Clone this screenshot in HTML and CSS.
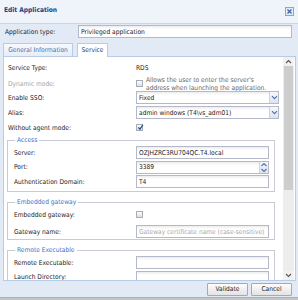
FILE: index.html
```html
<!DOCTYPE html>
<html lang="en">
<head>
  <meta charset="UTF-8" />
  <title>Edit Application</title>
  <link rel="stylesheet" href="styles.css">
</head>
<body>

  <div class="window">

    <!-- title bar -->
    <div class="header">
      <span class="title">Edit Application</span>
      <span class="close">
        <svg width="9" height="9" viewBox="0 0 9 9">
          <rect x="0.5" y="0.5" width="8" height="8" fill="#e3ecf9" stroke="#86a6d6" />
          <path d="M2.5 2.5 L6.5 6.5 M6.5 2.5 L2.5 6.5" stroke="#3a63a6" stroke-width="1.2" />
        </svg>
      </span>
    </div>

    <div class="type-row">
      <span class="type-label">Application type:</span>
      <div class="field type-field">Privileged application</div>
    </div>

    <!-- tabs -->
    <div class="tabs">
      <div class="tab">General Information</div>
      <div class="tab active">Service</div>
    </div>

    <div class="panel">
      <div class="content">

        <div class="row first">
          <span class="label">Service Type:</span>
          <span class="value">RDS</span>
        </div>

        <div class="row dyn">
          <span class="label muted">Dynamic mode:</span>
          <span class="check"></span>
          <span class="hint">Allows the user to enter the server's<br>address when launching the application.</span>
        </div>

        <div class="row sso">
          <span class="label">Enable SSO:</span>
          <div class="field combo"><span class="text">Fixed</span>
            <span class="trigger">
              <svg width="7" height="5" viewBox="0 0 7 5"><path d="M1 1.2 L3.5 3.7 L6 1.2" fill="none" stroke="#4d73b0" stroke-width="1.2" /></svg>
            </span>
          </div>
        </div>

        <div class="row">
          <span class="label">Alias:</span>
          <div class="field combo"><span class="text">admin windows (T4\vs_adm01)</span>
            <span class="trigger">
              <svg width="7" height="5" viewBox="0 0 7 5"><path d="M1 1.2 L3.5 3.7 L6 1.2" fill="none" stroke="#4d73b0" stroke-width="1.2" /></svg>
            </span>
          </div>
        </div>

        <div class="row">
          <span class="label">Without agent mode:</span>
          <span class="check checked">
            <svg width="7" height="7" viewBox="0 0 7 7">
              <path d="M1.3 3.4 L2.9 5.2 L5.9 0.8" fill="none" stroke="#2b4c8c" stroke-width="1.2" />
            </svg>
          </span>
        </div>

        <fieldset class="group">
          <legend>Access</legend>
          <div class="row">
            <span class="label">Server:</span>
            <div class="field"><span class="text">OZJHZRC3RU704QC.T4.local</span></div>
          </div>
          <div class="row next">
            <span class="label">Port:</span>
            <div class="field combo"><span class="text">3389</span>
              <span class="trigger">
                <svg width="8" height="11" viewBox="0 0 8 11">
                  <path d="M1.5 4 L4 1.5 L6.5 4" fill="none" stroke="#4d73b0" stroke-width="1.1" />
                  <path d="M1.5 7 L4 9.5 L6.5 7" fill="none" stroke="#4d73b0" stroke-width="1.1" />
                </svg>
              </span>
            </div>
          </div>
          <div class="row next">
            <span class="label">Authentication Domain:</span>
            <div class="field"><span class="text">T4</span></div>
          </div>
        </fieldset>

        <fieldset class="group">
          <legend>Embedded gateway</legend>
          <div class="row">
            <span class="label">Embedded gateway:</span>
            <span class="check"></span>
          </div>
          <div class="row gw">
            <span class="label">Gateway name:</span>
            <div class="field"><span class="text placeholder">Gateway certificate name (case-sensitive)</span></div>
          </div>
        </fieldset>

        <fieldset class="group">
          <legend>Remote Executable</legend>
          <div class="row">
            <span class="label">Remote Executable:</span>
            <div class="field"></div>
          </div>
          <div class="row next">
            <span class="label">Launch Directory:</span>
            <div class="field"></div>
          </div>
        </fieldset>

      </div>

      <!-- vertical scrollbar -->
      <div class="scrollbar">
        <span class="arrow">
          <svg width="7" height="5" viewBox="0 0 7 5"><path d="M1 4 L3.5 1.5 L6 4" fill="none" stroke="#555" stroke-width="1.1" /></svg>
        </span>
        <span class="thumb"></span>
        <span class="track"></span>
        <span class="arrow">
          <svg width="7" height="5" viewBox="0 0 7 5"><path d="M1 1 L3.5 3.5 L6 1" fill="none" stroke="#555" stroke-width="1.1" /></svg>
        </span>
      </div>
    </div>

    <div class="footer">
      <button class="btn">Validate</button>
      <button class="btn">Cancel</button>
    </div>

  </div>

</body>
</html>
```

FILE: styles.css
```css
* {
  box-sizing: border-box;
}

body {
  margin: 0;
  background: #c4c4c4;
  font-family: "DejaVu Sans Condensed", "DejaVu Sans", sans-serif;
  font-size: 6.6px;
  color: #222;
}

.window {
  width: 298px;
  height: 298px;
  background: #e2eaf6;
  border-bottom: 1px solid #a8b2c0;
  display: flex;
  flex-direction: column;
}

.header {
  height: 24px;
  flex: none;
  background: #eff4fb;
  border-bottom: 1px solid #c4d4ec;
  display: flex;
  align-items: flex-start;
  justify-content: space-between;
  padding: 6px 4px 0 4px;
  line-height: 8px;
}

.title {
  font-weight: bold;
  color: #15428b;
}

.close {
  display: flex;
  margin-top: 1px;
}

.type-row {
  height: 19px;
  flex: none;
  display: flex;
  align-items: flex-start;
  padding: 1px 6px 0 5px;
}

.type-label {
  width: 73px;
  line-height: 15px;
}

.type-field {
  flex: 1;
}

.tabs {
  height: 13px;
  flex: none;
  display: flex;
  gap: 4px;
  padding-left: 3px;
}

.tab {
  width: 70px;
  height: 13px;
  border: 1px solid #b9cbe6;
  border-bottom: none;
  background: linear-gradient(#f7f9fd, #e6edf8);
  color: #4a6fa8;
  text-align: center;
  line-height: 12px;
}

.tab.active {
  width: 31px;
  background: #fff;
  color: #15428b;
  height: 14px;
  position: relative;
  z-index: 1;
}

.panel {
  height: 225px;
  flex: none;
  margin: 0 2px 0 3px;
  background: #fff;
  border: 1px solid #b9cbe6;
  display: flex;
}

.content {
  flex: 1;
  overflow: hidden;
  padding: 0 4px;
}

.row {
  height: 13px;
  display: flex;
  align-items: center;
}

.row.first {
  height: 14px;
  margin-top: 4px;
}

.row.dyn {
  margin-top: 2px;
}

.row.sso {
  margin-top: 1px;
}

.content > .row + .row:not(.dyn):not(.sso) {
  margin-top: 2px;
}

.label {
  width: 128px;
  flex: none;
}

.muted {
  color: #a3a3a3;
}

.hint {
  margin-left: 3px;
  line-height: 8px;
  color: #666;
  white-space: nowrap;
}

.check {
  width: 7px;
  height: 7px;
  flex: none;
  border: 1px solid #a7adb6;
  background: linear-gradient(#fdfdfd, #dedede);
  position: relative;
}

.check svg {
  position: absolute;
  left: 0;
  top: -1px;
}

.field {
  flex: 1;
  height: 13px;
  border: 1px solid #b5b8c8;
  background: #fff linear-gradient(#ececec, #fff 3px);
  display: flex;
  align-items: center;
  padding-left: 2px;
  white-space: nowrap;
  overflow: hidden;
}

.field .text {
  flex: 1;
  overflow: hidden;
}

.placeholder {
  color: #a8a8a8;
}

.trigger {
  width: 9px;
  height: 11px;
  flex: none;
  border-left: 1px solid #c9d3e2;
  background: linear-gradient(#f6f8fb, #dce4ef);
  display: flex;
  align-items: center;
  justify-content: center;
}

.group {
  margin: 3px 4px 0 -1px;
  padding: 2px 5px 3px 6px;
  border: 1px solid #c8cad6;
  min-width: 0;
}

.group + .group {
  margin-top: 7px;
}

.group:last-child {
  padding-bottom: 0;
}

.group .label {
  width: 122px;
}

.group legend {
  padding: 0 2px;
  margin-left: 1px;
  line-height: 7px;
  color: #3b72c9;
}

.row.next {
  margin-top: 1.5px;
}

.row.gw {
  margin-top: 4px;
}

.group:nth-of-type(2) {
  padding-bottom: 1px;
}

.scrollbar {
  width: 11px;
  flex: none;
  margin-right: 1px;
  display: flex;
  flex-direction: column;
  background: #ededed;
}

.arrow {
  height: 9px;
  flex: none;
  display: flex;
  align-items: center;
  justify-content: center;
  background: #f1f1f1;
}

.thumb {
  height: 124px;
  flex: none;
  margin: 0 1px;
  background: #cdcdcd;
}

.track {
  flex: 1;
}

.footer {
  flex: 1;
  display: flex;
  justify-content: flex-end;
  align-items: flex-start;
  gap: 3px;
  padding: 2px 6px 0 0;
}

.btn {
  width: 41px;
  height: 13px;
  padding: 0;
  border: 1px solid #a9a9a9;
  border-radius: 1px;
  background: linear-gradient(#fdfdfd, #e3e3e3);
  font-family: inherit;
  font-size: 6.6px;
  color: #222;
  line-height: 11px;
}
```
